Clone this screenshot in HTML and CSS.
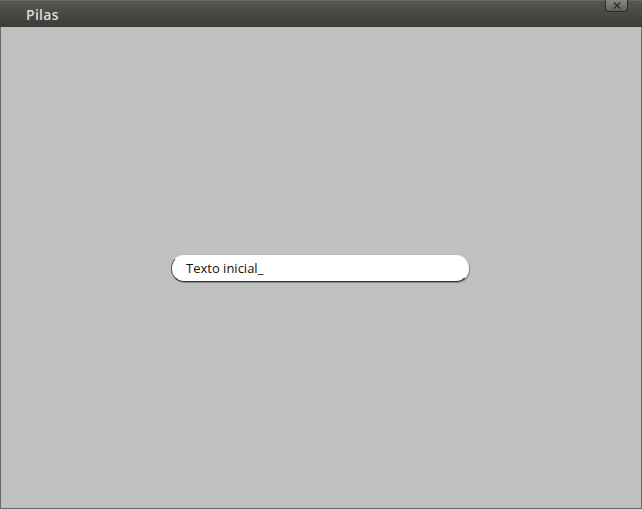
FILE: index.html
```html
<!DOCTYPE html>
<html>
<head>
<meta charset="utf-8">
<link rel="stylesheet" href="styles.css">
</head>
<body>
<div class="window">
  <div class="titlebar">
    <span class="title">Pilas</span>
    <div class="close">
      <svg width="10" height="7" viewBox="0 0 10 7"><path d="M2 0.5 L8 6.5 M8 0.5 L2 6.5" stroke="#2b2b2b" stroke-width="1.3" fill="none"/></svg>
    </div>
  </div>
  <div class="canvas">
    <div class="entry">Texto inicial_</div>
  </div>
</div>
</body>
</html>
```
FILE: styles.css
```css
html, body { margin: 0; padding: 0; }
body { width: 642px; height: 509px; overflow: hidden; background: #c0c0c0; }
.window {
  width: 642px; height: 509px; box-sizing: border-box;
  display: flex; flex-direction: column;
}
.titlebar {
  position: relative;
  height: 27px; flex: none;
  background: linear-gradient(#57554f, #3c3b37);
  border-top: 1px solid #6b6964;
  box-sizing: border-box;
  display: flex; align-items: center;
  padding-left: 26px;
}
.title {
  font-family: "Open Sans", "DejaVu Sans", sans-serif;
  font-weight: 600;
  font-size: 14px;
  color: #dfdbd2;
  letter-spacing: 0.3px;
  margin-top: 0px;
}
.close {
  position: absolute; left: 605px; top: -1px;
  width: 23px; height: 12px; box-sizing: border-box;
  border: 1px solid #2e2d2a; border-top: none;
  border-radius: 0 0 4px 4px;
  background: linear-gradient(#8a8883, #615f5a);
  display: flex; align-items: center; justify-content: center;
}
.canvas {
  flex: 1;
  background: #c0c0c0;
  border: 1px solid #6a6a6a; border-top: none;
  display: flex; align-items: flex-start; justify-content: center;
}
.entry {
  margin-top: 228px; margin-left: -2px;
  width: 298px; height: 27px; box-sizing: border-box;
  background: #fff;
  border-radius: 13px;
  border: 1px solid #fafafa;
  border-bottom: 1px solid #333;
  border-left: 1px solid #555;
  box-shadow: 1px 1px 0 #888;
  font-family: "Open Sans", "DejaVu Sans", sans-serif;
  font-size: 13px;
  color: #111;
  padding-left: 14px;
  line-height: 25px;
}
```
